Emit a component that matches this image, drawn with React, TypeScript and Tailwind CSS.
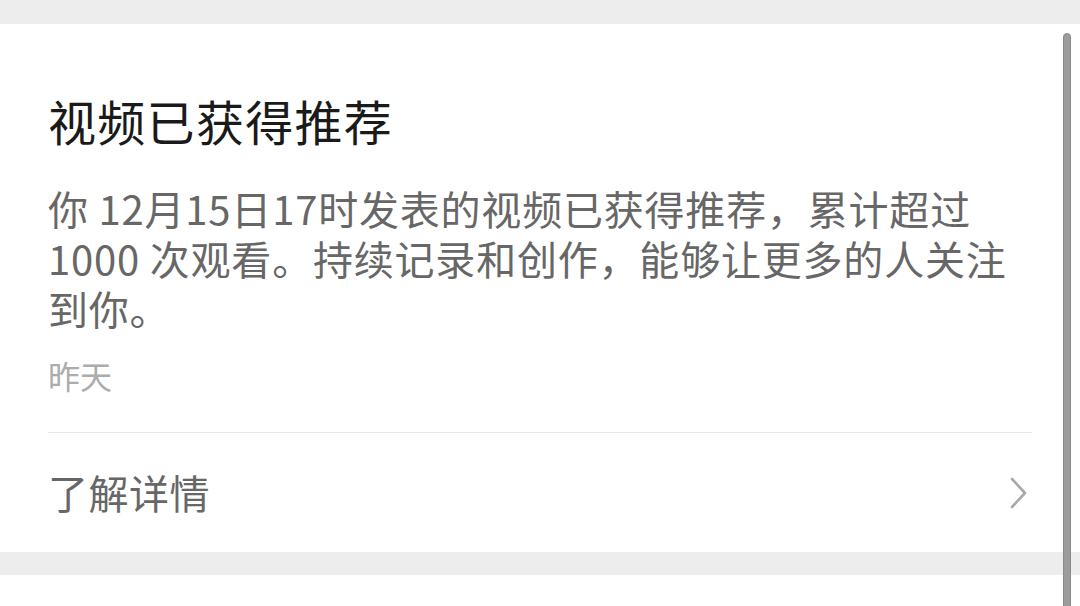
import React from 'react';

export default function App() {
  return (
    <div
      className="relative w-[1080px] h-[606px] overflow-hidden bg-white"
      style={{ fontFamily: '"Noto Sans CJK SC", "Noto Sans", sans-serif' }}
    >
      {/* top gap */}
      <div className="h-6 bg-[#ededed]" />

      {/* Notification card */}
      <div className="bg-white px-12 pt-[68px]">
        <h1 className="text-[48px] leading-[56px] tracking-[1.3px] text-[#1a1a1a] font-normal">视频已获得推荐</h1>

        <p className="mt-[35px] text-[40px] leading-[50px] tracking-[0.8px] text-[#676767]">
          你 12月15日17时发表的视频已获得推荐，累计超过 1000 次观看。持续记录和创作，能够让更多的人关注到你。
        </p>

        <div className="mt-[22px] text-[32px] leading-[40px] text-[#acacac]">昨天</div>

        <div className="mt-[37px] border-t border-[#e8e8e8]" />

        <div className="h-[119px] flex items-center justify-between">
          <span className="text-[40px] leading-[50px] tracking-[0.5px] text-[#676767] -mt-[2px]">了解详情</span>
          <svg width="20" height="34" viewBox="0 0 20 34" className="mr-[3px]">
            <path d="M3 3 L16 17 L3 31" fill="none" stroke="#a8a8a8" strokeWidth="2.6" strokeLinecap="round" strokeLinejoin="round" />
          </svg>
        </div>
      </div>

      {/* gap */}
      <div className="h-[23px] bg-[#ededed]" />
      <div className="h-[40px] bg-white" />

      {/* scroll indicator */}
      <div className="absolute left-[1063px] top-[33px] w-[8px] h-[620px] rounded-full bg-[#9c9c9c] border border-[#8a8a8a]" />
    </div>
  );
}
